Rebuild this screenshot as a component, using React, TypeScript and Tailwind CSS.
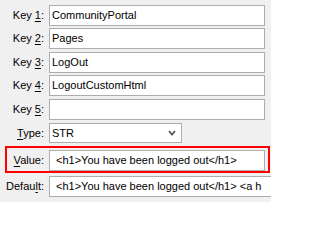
import React from 'react';

const font = { fontFamily: '"Liberation Sans", Arial, sans-serif' };

function Label({ pre, mn, post, w = 'w-[44px]' }: { pre: string; mn: string; post: string; w?: string }) {
    return (
        <div className={`${w} shrink-0 text-right text-[11px] text-black leading-none whitespace-nowrap`}>
            {pre}<span className="underline underline-offset-[2px] decoration-[1px]">{mn}</span>{post}
        </div>
    );
}

function Field({ value, w = 'w-[216px]', pl = 'pl-[2px]' }: { value: string; w?: string; pl?: string }) {
    return (
        <div className={`${w} h-[21px] ml-[5px] shrink-0 bg-white border border-[#adadad] flex items-center ${pl} overflow-hidden`}>
            <span className="text-[11px] text-black whitespace-nowrap leading-none">{value}</span>
        </div>
    );
}

export default function App() {
    return (
        <div className="w-[271px] h-[202px] bg-[#f0f0f0] overflow-hidden pt-[5px]" style={font}>
            <div className="flex items-center">
                <Label pre="Key " mn="1" post=":" />
                <Field value="CommunityPortal" />
            </div>
            <div className="flex items-center mt-[2px]">
                <Label pre="Key " mn="2" post=":" />
                <Field value="Pages" />
            </div>
            <div className="flex items-center mt-[3px]">
                <Label pre="Key " mn="3" post=":" />
                <Field value="LogOut" />
            </div>
            <div className="flex items-center mt-[2px]">
                <Label pre="Key " mn="4" post=":" />
                <Field value="LogoutCustomHtml" />
            </div>
            <div className="flex items-center mt-[3px]">
                <Label pre="Key " mn="5" post=":" />
                <Field value="" />
            </div>

            {/* Type select */}
            <div className="flex items-center mt-[3px]">
                <Label pre="" mn="T" post="ype:" />
                <div className="w-[133px] h-[20px] ml-[5px] bg-white border border-[#adadad] flex items-center justify-between pl-[2px] pr-[5px]">
                    <span className="text-[11px] text-black leading-none">STR</span>
                    <svg width="8" height="6" viewBox="0 0 8 6">
                        <polyline points="1,1 4,4.5 7,1" fill="none" stroke="#5a5a5a" strokeWidth="1.8" />
                    </svg>
                </div>
            </div>

            {/* Highlighted value row */}
            <div className="ml-[5px] mt-[3px] w-[265px] border-2 border-[#ff0000] flex items-center pt-[2px] pr-[3px]">
                <Label pre="" mn="V" post="alue:" w="w-[37px]" />
                <Field value=" <h1>You have been logged out</h1>" pl="pl-[6px]" />
            </div>

            <div className="flex items-center mt-[3px]">
                <Label pre="Defau" mn="l" post="t:" />
                <div className="w-[223px] h-[21px] ml-[5px] shrink-0 bg-white border-y border-l border-[#adadad] flex items-center pl-[6px] overflow-hidden">
                    <span className="text-[11px] text-black whitespace-nowrap leading-none">{'<h1>You have been logged out</h1> <a h'}</span>
                </div>
            </div>
        </div>
    );
}
